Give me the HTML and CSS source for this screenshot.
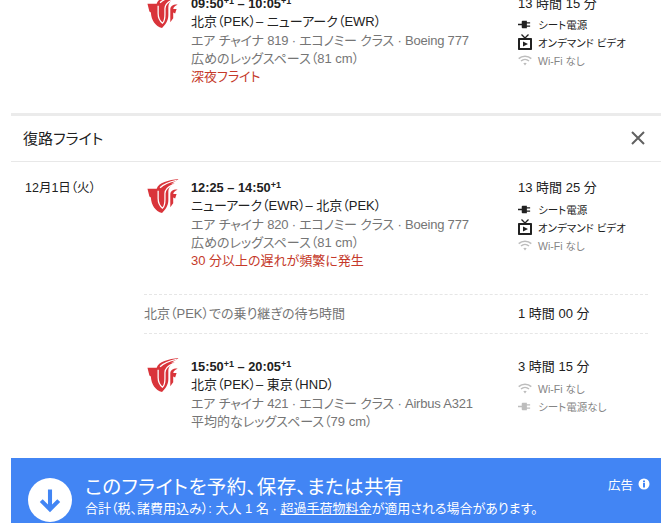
FILE: index.html
```html
<!DOCTYPE html>
<html>
<head>
	<title>フライト</title>
	<meta charset="UTF-8">
	<link rel="stylesheet" href="styles.css">
</head>
<body>
	<svg class="defs">
		<symbol id="logo" viewBox="0 0 32 35">
			<g fill="#d9343a">
				<path d="M0 10H9.500C11 4 22 1 32 0 29 3 26 4 24 4.500L28 5C24 6.500 21.500 9 21.500 14V22C21.500 28 18 32 15 35 8 33 4 27 3.500 19L2 18Z"/>
				<path d="M23.500 16C23.500 12.500 27 10.500 31 11 28.500 12 27 13 26.500 15.500H30L28.500 20 26.500 19V25L23.500 29Z"/>
			</g>
			<g fill="none" stroke="#fff" stroke-width="1.300">
				<path d="M11 12V20C11 25 13 28 15.500 30 17.500 28 18 25 18 21V15C18 11 21 8 27 5.500"/>
				<path d="M13 9C17 5 23 3 30 1.500"/>
			</g>
		</symbol>
		<symbol id="plug" viewBox="0 0 15 9">
			<path fill="currentColor" d="M0 3.600H4V1.600C4 .9 4.600.5 5.200.5H9.500V2H13V3.400H9.500V5.600H13V7H9.500V8.500H5.200C4.600 8.500 4 8.100 4 7.400V5.400H0Z"/>
		</symbol>
		<symbol id="tv" viewBox="0 0 14 16">
			<path fill="none" stroke="currentColor" stroke-width="1.300" d="M3.500.5 7 4 10.500.5"/>
			<path fill="currentColor" fill-rule="evenodd" d="M1 4H13C13.600 4 14 4.400 14 5V15C14 15.600 13.600 16 13 16H1C.4 16 0 15.600 0 15V5C0 4.400.4 4 1 4ZM2 6V14H12V6ZM5 7.500 10 10 5 12.500Z"/>
		</symbol>
		<symbol id="wifi" viewBox="0 0 14 11">
			<g fill="none" stroke="currentColor" stroke-width="1.500">
				<path d="M.7 3.600C4.200.4 9.800.4 13.300 3.600"/>
				<path d="M3 6C5.300 4 8.700 4 11 6"/>
			</g>
			<path fill="currentColor" d="M5.300 8.200C6.300 7.500 7.700 7.500 8.700 8.200L7 10.500Z"/>
		</symbol>
	</svg>

	<div class="page">
		<div class="panel">
			<section class="outbound">
				<div class="date"></div>
				<svg class="logo"><use href="#logo"/></svg>
				<div class="info">
					<div class="times">09:50<sup>+1</sup> – 10:05<sup>+1</sup></div>
					<div class="route">北京（PEK）– ニューアーク（EWR）</div>
					<div class="sub flt">エア チャイナ 819 · エコノミー クラス · Boeing 777</div>
					<div class="sub">広めのレッグスペース（81 cm）</div>
					<div class="warn">深夜フライト</div>
				</div>
				<div class="extras">
					<div class="dur">13 時間 15 分</div>
					<div class="amen"><svg class="ico-plug"><use href="#plug"/></svg>シート電源</div>
					<div class="amen"><svg class="ico-tv"><use href="#tv"/></svg>オンデマンド ビデオ</div>
					<div class="amen off"><svg class="ico-wifi"><use href="#wifi"/></svg>Wi-Fi なし</div>
				</div>
			</section>

			<header class="head">
				<h2>復路フライト</h2>
				<svg class="close" viewBox="0 0 14 14"><path d="M1 1 13 13M13 1 1 13"/></svg>
			</header>

			<section class="leg">
				<div class="date">12月1日（火）</div>
				<svg class="logo"><use href="#logo"/></svg>
				<div class="info">
					<div class="times">12:25 – 14:50<sup>+1</sup></div>
					<div class="route">ニューアーク（EWR）– 北京（PEK）</div>
					<div class="sub flt">エア チャイナ 820 · エコノミー クラス · Boeing 777</div>
					<div class="sub">広めのレッグスペース（81 cm）</div>
					<div class="warn">30 分以上の遅れが頻繁に発生</div>
				</div>
				<div class="extras">
					<div class="dur">13 時間 25 分</div>
					<div class="amen"><svg class="ico-plug"><use href="#plug"/></svg>シート電源</div>
					<div class="amen"><svg class="ico-tv"><use href="#tv"/></svg>オンデマンド ビデオ</div>
					<div class="amen off"><svg class="ico-wifi"><use href="#wifi"/></svg>Wi-Fi なし</div>
				</div>
			</section>

			<div class="layover">
				<span>北京（PEK）での乗り継ぎの待ち時間</span>
				<b>1 時間 00 分</b>
			</div>

			<section class="leg leg2">
				<div class="date"></div>
				<svg class="logo"><use href="#logo"/></svg>
				<div class="info">
					<div class="times">15:50<sup>+1</sup> – 20:05<sup>+1</sup></div>
					<div class="route">北京（PEK）– 東京（HND）</div>
					<div class="sub flt">エア チャイナ 421 · エコノミー クラス · Airbus A321</div>
					<div class="sub">平均的なレッグスペース（79 cm）</div>
				</div>
				<div class="extras">
					<div class="dur">3 時間 15 分</div>
					<div class="amen off"><svg class="ico-wifi"><use href="#wifi"/></svg>Wi-Fi なし</div>
					<div class="amen off"><svg class="ico-plug"><use href="#plug"/></svg>シート電源なし</div>
				</div>
			</section>

			<footer class="book">
				<div class="circle">
					<svg viewBox="0 0 24 24"><path d="M12 3V20M4.500 12.500 12 20 19.500 12.500"/></svg>
				</div>
				<div class="book-text">
					<div class="book-title">このフライトを予約、保存、または共有</div>
					<div class="book-sub">合計（税、諸費用込み）: 大人 1 名 · <u>超過手荷物料金</u>が適用される場合があります。</div>
				</div>
				<div class="ad">広告<svg viewBox="0 0 12 12"><circle cx="6" cy="6" r="5.500"/><path d="M5 5H7V9.500H5ZM5 2.500H7V4.200H5Z"/></svg></div>
			</footer>
		</div>
	</div>
</body>
</html>
```

FILE: styles.css
```css
*{
	margin: 0;
	padding: 0;
	box-sizing: border-box;
}
html, body{
	height: 523px;
	overflow: hidden;
	background: #fff;
}
body{
	font-family: "Liberation Sans", "Noto Sans CJK JP", sans-serif;
	font-feature-settings: "palt";
	font-size: 13px;
	color: #212121;
}
.defs{
	display: none;
}
.page{
	height: 523px;
	overflow: hidden;
}
.panel{
	width: 650px;
	margin: -5px 0 0 11px;
}
.outbound, .leg{
	display: grid;
	grid-template-columns: 133px 47px 327px 1fr;
}
.outbound{
	height: 121px;
	border-bottom: 3px solid #ebebeb;
}
.outbound .dur{
	height: 20px;
}
.leg{
	padding-top: 17px;
	height: 132px;
}
.leg2{
	padding-top: 24px;
	height: 124px;
}
.date{
	padding-left: 14px;
	line-height: 18px;
	font-size: 12.500px;
}
.logo{
	width: 32px;
	height: 34px;
	margin-left: 3px;
}
.outbound .logo{
	margin-top: -1px;
}
.info{
	line-height: 18px;
}
.times{
	font-weight: 700;
	font-size: 12.800px;
	height: 18px;
}
sup{
	font-size: 9px;
	line-height: 0;
	vertical-align: 4px;
}
.route{
	height: 19px;
}
.sub{
	color: #757575;
}
.sub.flt{
	letter-spacing: -.2px;
}
.warn{
	color: #c5392a;
}
.dur{
	line-height: 18px;
	height: 21px;
}
.amen{
	display: flex;
	align-items: center;
	height: 18px;
	font-size: 10.500px;
	white-space: nowrap;
}
.amen svg{
	flex: none;
	margin-right: 6px;
}
.amen.off{
	color: #858585;
}
.amen.off svg{
	color: #bdbdbd;
}
.ico-plug{
	width: 14px;
	height: 9px;
}
.ico-tv{
	width: 14px;
	height: 16px;
}
.ico-wifi{
	width: 14px;
	height: 11px;
}
.head{
	display: flex;
	align-items: center;
	justify-content: space-between;
	height: 46px;
	padding: 0 16px 2px 12px;
	border-bottom: 1px solid #e8e8e8;
}
.head h2{
	font-size: 15px;
	font-weight: 400;
}
.close{
	width: 14px;
	height: 14px;
	fill: none;
	stroke: #616161;
	stroke-width: 2;
}
.layover{
	display: grid;
	grid-template-columns: 374px 1fr;
	align-items: center;
	height: 40px;
	margin: 0 13px 0 133px;
	padding-bottom: 3px;
	border-top: 1px dashed #e6e6e6;
	border-bottom: 1px dashed #e6e6e6;
	color: #757575;
}
.layover b{
	font-weight: 400;
	color: #212121;
}
.book{
	display: flex;
	height: 65px;
	background: #4285f4;
	color: #fff;
}
.circle{
	display: flex;
	align-items: center;
	justify-content: center;
	flex: none;
	width: 44px;
	height: 44px;
	margin: 20px 0 0 17px;
	background: #fff;
	border-radius: 50%;
}
.circle svg{
	width: 28px;
	height: 28px;
	fill: none;
	stroke: #4285f4;
	stroke-width: 3.500;
}
.book-text{
	flex: 1;
	padding: 17px 0 0 13px;
	white-space: nowrap;
}
.book-title{
	font-size: 19.500px;
	line-height: 24px;
	letter-spacing: .4px;
}
.book-sub{
	font-size: 13px;
	line-height: 20px;
}
.ad{
	display: flex;
	align-items: center;
	gap: 5px;
	flex: none;
	height: 16px;
	margin: 18px 11px 0 0;
	font-size: 12.500px;
}
.ad svg{
	width: 12px;
	height: 12px;
	fill: #fff;
}
.ad svg path{
	fill: #4285f4;
}
```
